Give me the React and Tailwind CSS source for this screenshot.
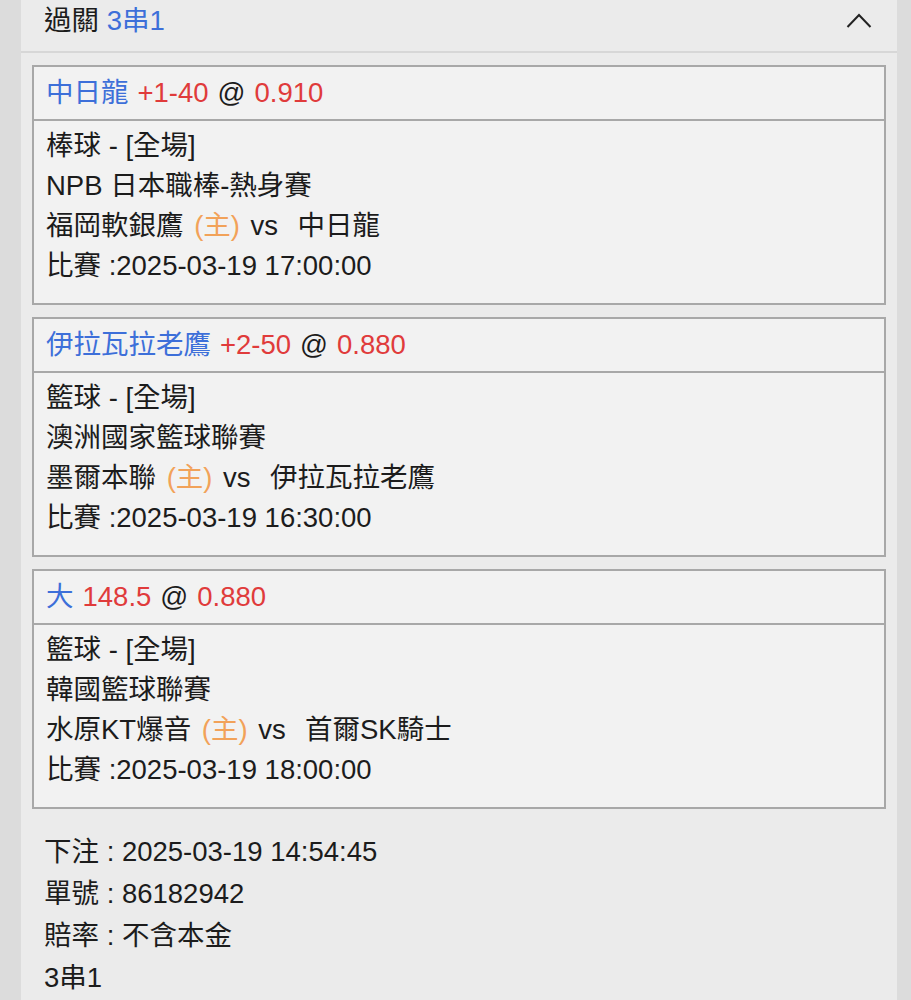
import React from "react";

const bets = [
  {
    pick: "中日龍",
    line: "+1-40",
    odds: "0.910",
    sport: "棒球 - [全場]",
    league: "NPB 日本職棒-熱身賽",
    home: "福岡軟銀鷹",
    away: "中日龍",
    time: "2025-03-19 17:00:00",
  },
  {
    pick: "伊拉瓦拉老鷹",
    line: "+2-50",
    odds: "0.880",
    sport: "籃球 - [全場]",
    league: "澳洲國家籃球聯賽",
    home: "墨爾本聯",
    away: "伊拉瓦拉老鷹",
    time: "2025-03-19 16:30:00",
  },
  {
    pick: "大",
    line: "148.5",
    odds: "0.880",
    sport: "籃球 - [全場]",
    league: "韓國籃球聯賽",
    home: "水原KT爆音",
    away: "首爾SK騎士",
    time: "2025-03-19 18:00:00",
  },
];

function BetCard({ bet }) {
  return (
    <div className="border-2 border-[#a8a8a8] bg-[#f2f2f2]">
      <div className="h-[54px] flex items-center px-3 border-b-2 border-[#a8a8a8]">
        <span className="text-[#3d6fd9]">{bet.pick}</span>
        <span className="text-[#e03b3b] ml-[9px]">{bet.line}</span>
        <span className="ml-[9px]">@</span>
        <span className="text-[#e03b3b] ml-[9px]">{bet.odds}</span>
      </div>
      <div className="px-3 pt-[5px] pb-[17px] leading-[40px]">
        <div>{bet.sport}</div>
        <div>{bet.league}</div>
        <div>
          {bet.home} <span className="ml-[3px] text-[#f2a259]">(主)</span>{" "}
          <span className="ml-[3px] mr-[4px]">vs</span>&nbsp; {bet.away}
        </div>
        <div>比賽 :{bet.time}</div>
      </div>
    </div>
  );
}

export default function App() {
  return (
    <div
      className="min-h-screen bg-[#dcdcdc] text-[#1c1c1c] text-[27.5px]"
      style={{ fontFamily: '"Liberation Sans", "Noto Sans CJK TC", sans-serif' }}
    >
      <div className="ml-[21px] w-[876px] min-h-screen bg-[#ebebeb]">
        <div className="h-[53px] flex items-start justify-between pl-[23px] pr-[25px] border-b-2 border-[#d7d7d7]">
          <div className="leading-[42px]">
            過關 <span className="text-[#3d6fd9]">3串1</span>
          </div>
          <svg width="26" height="16" viewBox="0 0 26 16" className="mt-[13px]">
            <polyline points="1.5,14 13,2 24.5,14" fill="none" stroke="#222" strokeWidth="2" />
          </svg>
        </div>

        <div className="px-[11px] pt-[12px] flex flex-col gap-[12px]">
          {bets.map((b) => (
            <BetCard key={b.pick} bet={b} />
          ))}
        </div>

        <div className="px-[23px] pt-[22px] leading-[42px]">
          <div>下注 : 2025-03-19 14:54:45</div>
          <div>單號 : 86182942</div>
          <div>賠率 : 不含本金</div>
          <div>3串1</div>
        </div>
      </div>
    </div>
  );
}
